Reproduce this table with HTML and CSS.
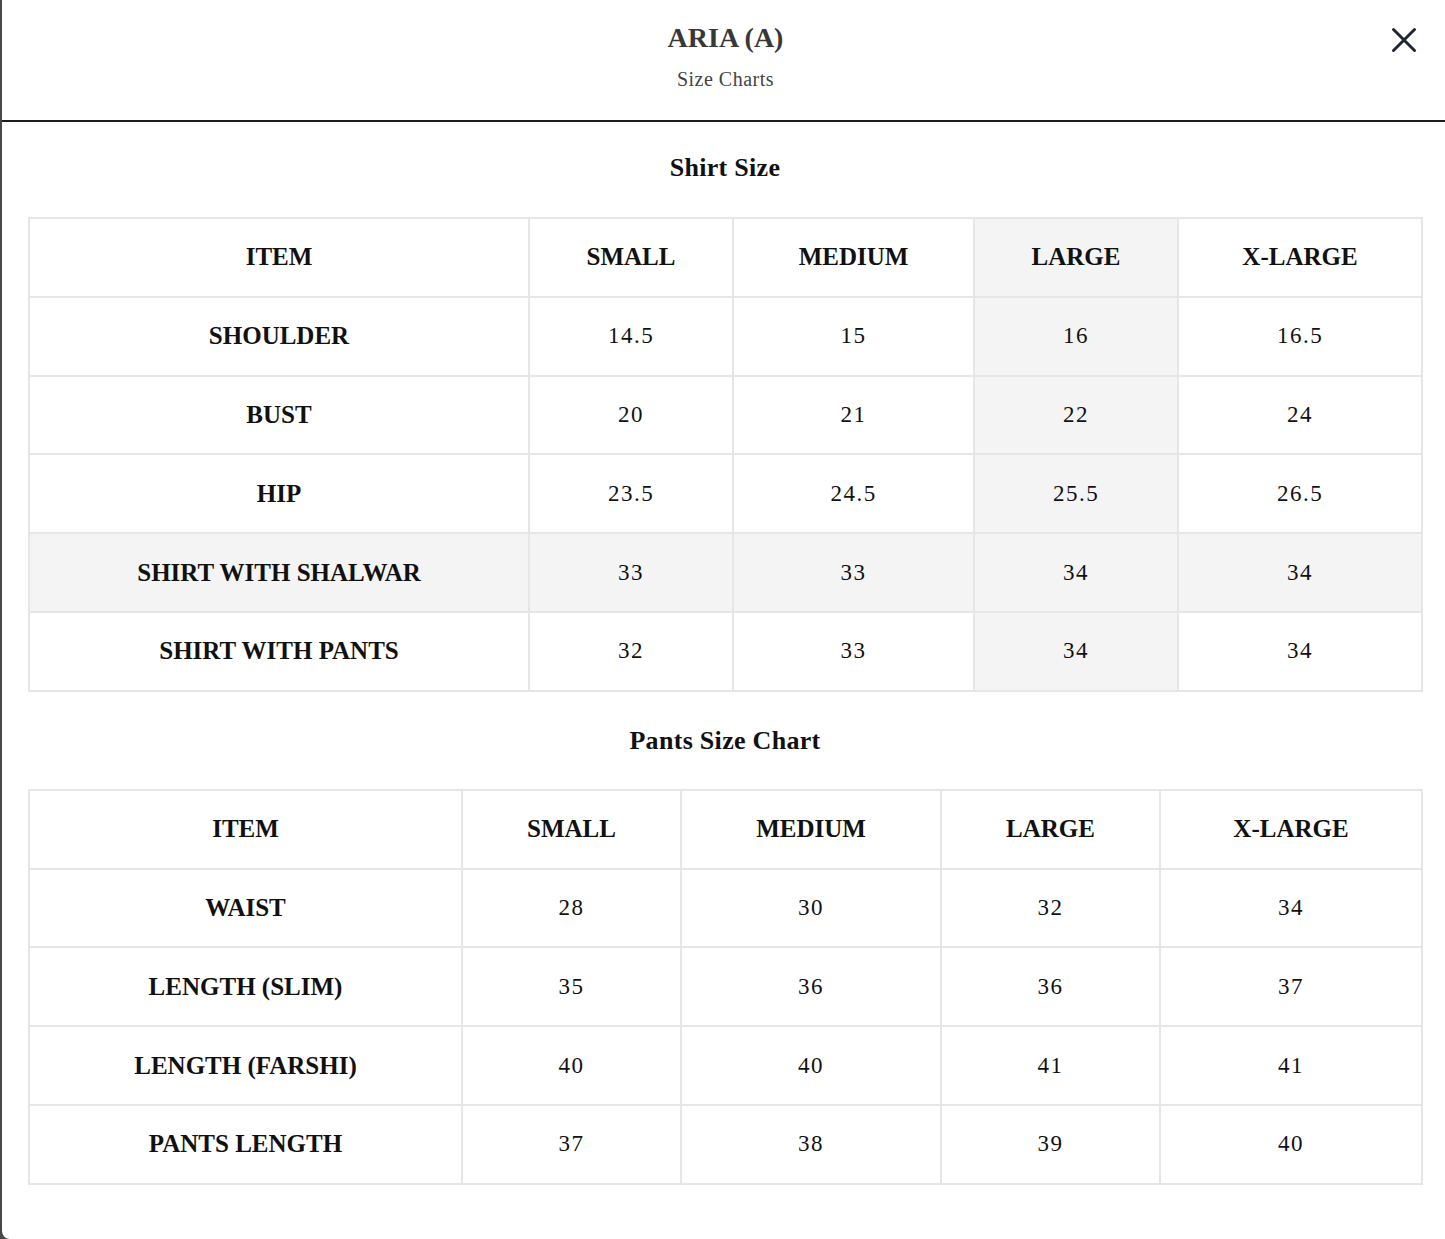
FILE: index.html
```html
<!DOCTYPE html>
<html lang="en">
<head>
<meta charset="utf-8">
<title>ARIA (A) - Size Charts</title>
<link rel="stylesheet" href="styles.css">
</head>
<body>
<div class="modal">
  <header class="modal-header">
    <h1 class="title">ARIA (A)</h1>
    <p class="subtitle">Size Charts</p>
    <button class="close" aria-label="Close">
      <svg width="26" height="26" viewBox="0 0 26 26"><path d="M2.5 2.5 L23.5 23.5 M23.5 2.5 L2.5 23.5" stroke="#1e2733" stroke-width="3" stroke-linecap="round" fill="none"/></svg>
    </button>
  </header>
  <main class="content">
    <h2 class="section-title first">Shirt Size</h2>
    <table class="chart shirt">
      <colgroup>
        <col class="c1"><col class="c2"><col class="c3"><col class="c4 hl"><col class="c5">
      </colgroup>
      <tr><th>ITEM</th><th>SMALL</th><th>MEDIUM</th><th class="hl">LARGE</th><th>X-LARGE</th></tr>
      <tr><th>SHOULDER</th><td>14.5</td><td>15</td><td class="hl">16</td><td>16.5</td></tr>
      <tr><th>BUST</th><td>20</td><td>21</td><td class="hl">22</td><td>24</td></tr>
      <tr><th>HIP</th><td>23.5</td><td>24.5</td><td class="hl">25.5</td><td>26.5</td></tr>
      <tr class="hl"><th>SHIRT WITH SHALWAR</th><td>33</td><td>33</td><td>34</td><td>34</td></tr>
      <tr><th>SHIRT WITH PANTS</th><td>32</td><td>33</td><td class="hl">34</td><td>34</td></tr>
    </table>
    <h2 class="section-title">Pants Size Chart</h2>
    <table class="chart pants">
      <colgroup>
        <col class="c1"><col class="c2"><col class="c3"><col class="c4"><col class="c5">
      </colgroup>
      <tr><th>ITEM</th><th>SMALL</th><th>MEDIUM</th><th>LARGE</th><th>X-LARGE</th></tr>
      <tr><th>WAIST</th><td>28</td><td>30</td><td>32</td><td>34</td></tr>
      <tr><th>LENGTH (SLIM)</th><td>35</td><td>36</td><td>36</td><td>37</td></tr>
      <tr><th>LENGTH (FARSHI)</th><td>40</td><td>40</td><td>41</td><td>41</td></tr>
      <tr><th>PANTS LENGTH</th><td>37</td><td>38</td><td>39</td><td>40</td></tr>
    </table>
  </main>
</div>
</body>
</html>
```

FILE: styles.css
```css
html, body {
  margin: 0;
  padding: 0;
  height: 100%;
  overflow: hidden;
}
body {
  background: #474747;
  font-family: "Liberation Serif", "Times New Roman", serif;
  color: #111;
}
.modal {
  margin-left: 2px;
  height: 1239px;
  background: #fff;
  border-bottom-left-radius: 8px;
  position: relative;
}
.modal-header {
  height: 122px;
  box-sizing: border-box;
  border-bottom: 2px solid #1c1c1c;
  padding-top: 20px;
  padding-left: 4px;
  text-align: center;
}
.title {
  margin: 0;
  font-size: 28px;
  line-height: 36px;
  font-weight: bold;
  color: #383838;
}
.subtitle {
  margin: 5px 0 0;
  font-size: 20px;
  line-height: 36px;
  letter-spacing: 0.5px;
  color: #444;
}
.close {
  position: absolute;
  top: 27px;
  right: 28px;
  width: 26px;
  height: 26px;
  padding: 0;
  border: 0;
  background: none;
  display: flex;
}
.content {
  padding: 0 24px 0 26px;
}
.section-title {
  margin: 33px 0 32px;
  padding-left: 1px;
  font-size: 26px;
  line-height: 32px;
  font-weight: bold;
  text-align: center;
  letter-spacing: 0.3px;
  color: #111;
}
.section-title.first {
  margin-top: 30px;
  margin-bottom: 33px;
}
.chart {
  width: 100%;
  border-collapse: collapse;
  table-layout: fixed;
}
.chart th, .chart td {
  border: 2px solid #e6e6e6;
  height: 76.8px;
  padding: 0;
  text-align: center;
  vertical-align: middle;
  color: #111;
}
.chart th {
  font-size: 25px;
  font-weight: bold;
}
.chart td {
  font-size: 23px;
  letter-spacing: 1.5px;
}
.chart .hl {
  background: #f4f4f4;
}
.shirt .c1 { width: 500px; }
.shirt .c2 { width: 204px; }
.shirt .c3 { width: 241px; }
.shirt .c4 { width: 204px; }
.shirt .c5 { width: 244px; }
.pants .c1 { width: 433px; }
.pants .c2 { width: 219px; }
.pants .c3 { width: 260px; }
.pants .c4 { width: 219px; }
.pants .c5 { width: 262px; }
```
